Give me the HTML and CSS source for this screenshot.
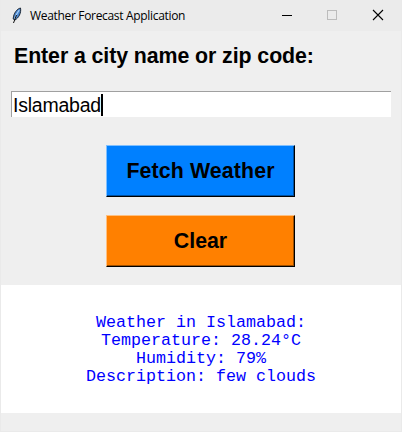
FILE: index.html
```html
<!DOCTYPE html>
<html lang="en">
<head>
<meta charset="utf-8">
<title>Weather Forecast Application</title>
<link rel="stylesheet" href="styles.css">
</head>
<body>
<div class="window">
  <header class="titlebar">
    <svg class="feather" width="12" height="17" viewBox="0 0 12 17">
      <path d="M9.5 1C6 2 2.5 6 2.2 12L4 13C7.5 11 10.5 6 9.5 1Z" fill="#4a86cf" stroke="#1c2735" stroke-width="1"/>
      <path d="M8.2 3C6 6 4.5 9 3.6 12" fill="none" stroke="#a9d2f7" stroke-width="1.2"/>
      <path d="M5.5 8L2.5 16" fill="none" stroke="#111" stroke-width="1"/>
    </svg>
    <span class="title">Weather Forecast Application</span>
    <div class="controls">
      <svg width="46" height="30" viewBox="0 0 46 30"><path d="M19 15.5H29" stroke="#000"/></svg>
      <svg width="46" height="30" viewBox="0 0 46 30"><rect x="18.5" y="10.5" width="9" height="9" fill="none" stroke="#bcbcbc"/></svg>
      <svg width="46" height="30" viewBox="0 0 46 30"><path d="M18 10L28 20M28 10L18 20" stroke="#000" stroke-width="1.1"/></svg>
    </div>
  </header>
  <main class="content">
    <h1 class="prompt">Enter a city name or zip code:</h1>
    <div class="entry"><span class="value">Islamabad</span><span class="caret"></span></div>
    <button class="btn fetch">Fetch Weather</button>
    <button class="btn clear">Clear</button>
    <div class="result">Weather in Islamabad:
Temperature: 28.24°C
Humidity: 79%
Description: few clouds</div>
  </main>
</div>
</body>
</html>
```
FILE: styles.css
```css
* { box-sizing: border-box; }
body { margin: 0; background: #efefef; }
.window {
  width: 402px;
  height: 432px;
  border: 1px solid #eaeaea;
  border-top: 0;
  background: #efefef;
  font-family: "Liberation Sans", Arial, sans-serif;
  color: #000;
  overflow: hidden;
}
.titlebar {
  display: flex;
  align-items: center;
  height: 31px;
  padding-left: 10px;
  background: #ebebeb;
}
.feather { flex: none; margin-right: 7px; }
.title {
  padding-top: 1px;
  font: 12px/16px "Open Sans", "Noto Sans", sans-serif;
  letter-spacing: -0.32px;
  white-space: nowrap;
}
.controls { display: flex; height: 30px; margin-left: auto; align-self: flex-start; }
.controls svg { flex: none; }
.content { display: flex; flex-direction: column; align-items: center; }
.prompt {
  align-self: flex-start;
  margin: 13px 0 0 13px;
  font-size: 21.33px;
  line-height: 24px;
  font-weight: bold;
  letter-spacing: -0.08px;
  white-space: nowrap;
}
.entry {
  display: flex;
  align-items: center;
  width: 380px;
  height: 26px;
  margin-top: 23px;
  padding-left: 1px;
  border-top: 1px solid #a0a0a0;
  border-left: 1px solid #a0a0a0;
  background: #fff;
}
.value { font-size: 19.5px; line-height: 24px; letter-spacing: -0.23px; }
.caret { width: 2px; height: 22px; background: #000; }
.btn {
  width: 189px;
  height: 52px;
  margin-right: 1px;
  padding: 0;
  border: 1px solid;
  border-radius: 0;
  font: bold 21.33px/24px "Liberation Sans", Arial, sans-serif;
  color: #000;
}
.fetch {
  margin-top: 28px;
  background: #0080ff;
  border-color: #80c0ff #000 #000 #80c0ff;
  box-shadow: inset -1px -1px #0050a0;
  letter-spacing: 0.12px;
}
.clear {
  margin-top: 18px;
  background: #ff8000;
  border-color: #ffc080 #000 #000 #ffc080;
  box-shadow: inset -1px -1px #a05000;
}
.result {
  width: 400px;
  height: 128px;
  margin-top: 18px;
  padding-top: 29px;
  background: #fff;
  color: #0000ff;
  font: 16.67px/18px "Liberation Mono", "Courier New", monospace;
  text-align: center;
  white-space: pre-line;
}
```
